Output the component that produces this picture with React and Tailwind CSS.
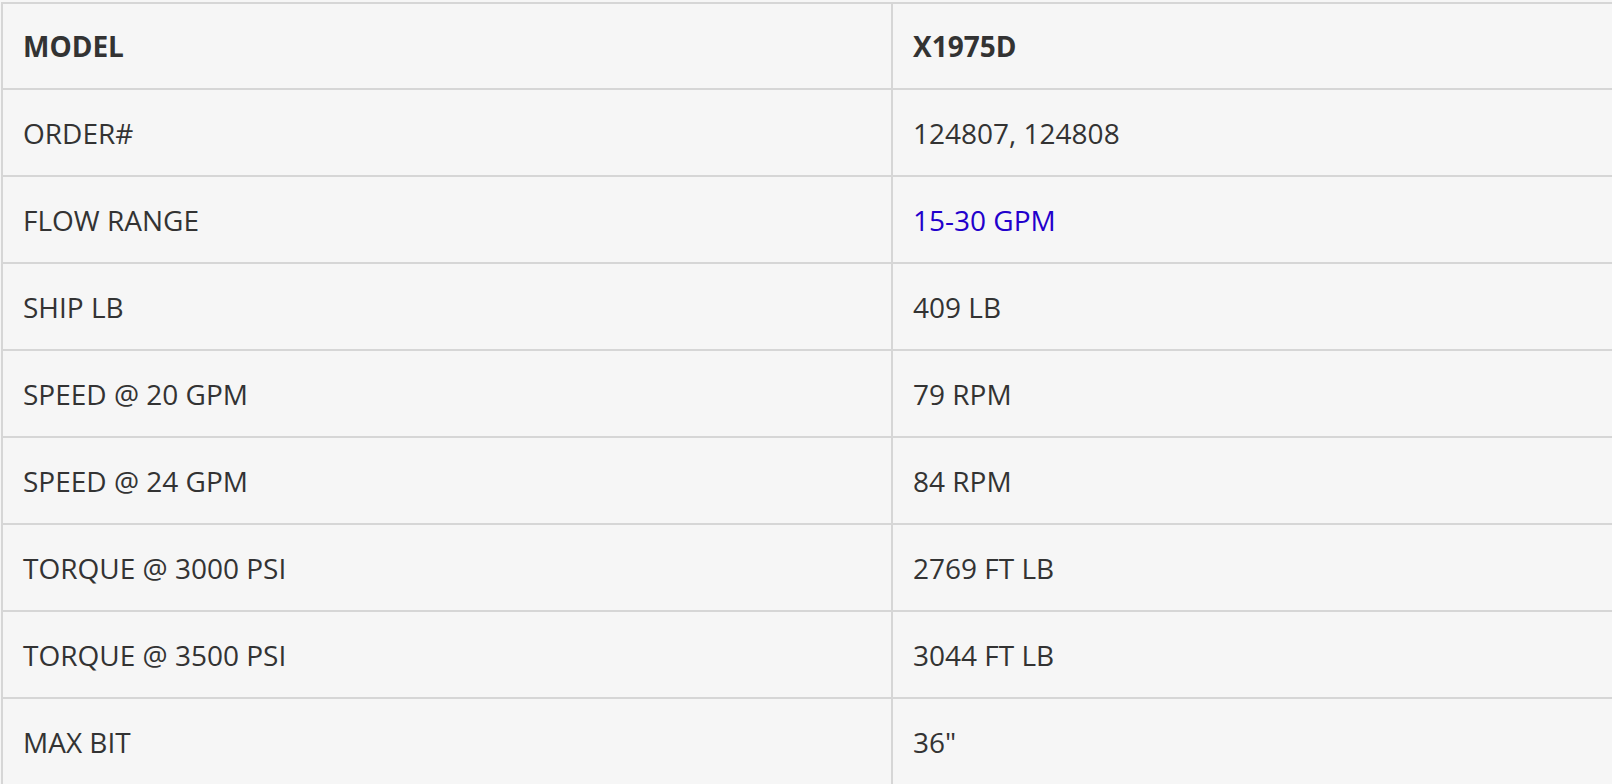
import React from "react";

const rows = [
  { label: "ORDER#", value: "124807, 124808" },
  { label: "FLOW RANGE", value: "15-30 GPM", link: true },
  { label: "SHIP LB", value: "409 LB" },
  { label: "SPEED @ 20 GPM", value: "79 RPM" },
  { label: "SPEED @ 24 GPM", value: "84 RPM" },
  { label: "TORQUE @ 3000 PSI", value: "2769 FT LB" },
  { label: "TORQUE @ 3500 PSI", value: "3044 FT LB" },
  { label: "MAX BIT", value: '36"' },
];

const App = () => {
  return (
    <div
      className="w-screen h-screen overflow-hidden bg-[#f6f6f6] pt-[2px] pl-[1px] text-[#333333]"
      style={{ fontFamily: '"Open Sans", "Liberation Sans", sans-serif' }}
    >
      <div className="w-[1800px]">
        {/* Header */}
        <div className="flex h-[86px] border-t-2 border-[#d6d6d6]">
          <div className="w-[890px] flex items-center border-l-2 border-[#d6d6d6] pl-[20px] text-[28px] font-bold">
            MODEL
          </div>
          <div className="flex-1 flex items-center border-l-2 border-[#d6d6d6] pl-[20px] text-[28px] font-bold">
            X1975D
          </div>
        </div>

        {/* Spec rows */}
        {rows.map((row, i) => (
          <div key={i} className="flex h-[87px] border-t-2 border-[#d6d6d6]">
            <div className="w-[890px] flex items-center border-l-2 border-[#d6d6d6] pl-[20px] text-[28px]">
              {row.label}
            </div>
            <div className="flex-1 flex items-center border-l-2 border-[#d6d6d6] pl-[20px] text-[28px]">
              {row.link ? (
                <span className="text-[#2200cc]">{row.value}</span>
              ) : (
                row.value
              )}
            </div>
          </div>
        ))}
        <div className="border-t-2 border-[#d6d6d6]" />
      </div>
    </div>
  );
};

export default App;
